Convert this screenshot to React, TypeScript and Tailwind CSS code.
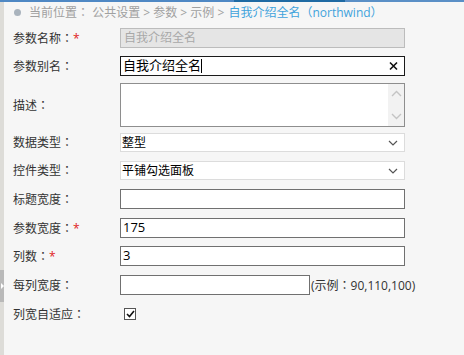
import React from 'react';

const font = { fontFamily: '"Open Sans", "Noto Sans CJK SC", sans-serif' };

// fullwidth colon centred like the original font
const Colon: React.FC = () => <span className="font-['Noto_Sans_CJK_TC',sans-serif]">：</span>;

const Label: React.FC<{ text: string; required?: boolean }> = ({ text, required }) => (
  <div className="w-[107px] shrink-0 text-[12px] text-[#333] leading-none">
    {text}
    <Colon />
    {required && <span className="text-[#e02020]">*</span>}
  </div>
);

const Chevron: React.FC = () => (
  <svg width="10" height="6" viewBox="0 0 10 6" className="absolute right-[6px] top-1/2 -translate-y-1/2">
    <path d="M1 1 L5 5 L9 1" fill="none" stroke="#555" strokeWidth="1.2" />
  </svg>
);

const App: React.FC = () => {
  return (
    <div className="w-[464px] h-[355px] bg-[#f6f6f6] flex flex-col overflow-hidden" style={font}>
      <div className="h-[2px] flex shrink-0">
        <div className="w-[234px] bg-[#4f88c4]" />
        <div className="w-[111px] bg-[#1f6aa3]" />
        <div className="flex-1 bg-[#5a8fc6]" />
      </div>
      <div className="flex flex-1">
        <div className="w-[4px] bg-[#dddcd8] shrink-0 flex flex-col">
          <div className="mt-[268px] h-[32px] bg-[#b9b9b9] flex items-center justify-center">
            <div className="w-0 h-0 border-y-[3px] border-y-transparent border-l-[3px] border-l-white" />
          </div>
        </div>
        <div className="flex-1 flex flex-col">
          <div className="h-[21px] flex items-center pl-[10px] text-[12px] leading-none">
            <span className="w-[7px] h-[7px] rounded-full bg-[#a9b3bd] mr-[8px]" />
            <span className="text-[#a0a0a0] whitespace-pre">
              当前位置<Colon /> 公共设置 &gt; 参数 &gt; 示例 &gt;{' '}
            </span>
            <span className="text-[#3fa3dc] ml-[1px]">自我介绍全名（northwind）</span>
          </div>

          <div className="flex items-center pl-[9px] mt-[5px] h-[20px]">
            <Label text="参数名称" required />
            <div className="w-[285px] h-[20px] bg-[#e5e5e5] border border-[#bcbcbc] flex items-center pl-[3px] text-[12px] text-[#a8a8a8]">
              自我介绍全名
            </div>
          </div>

          <div className="flex items-center pl-[9px] mt-[8px] h-[20px]">
            <Label text="参数别名" />
            <div className="relative w-[285px] h-[20px] bg-white border border-[#1a1a1a] flex items-center pl-[2px] text-[13px] text-black">
              自我介绍全名<span className="w-px h-[14px] bg-black" />
              <svg width="9" height="9" viewBox="0 0 9 9" className="absolute right-[6px] top-1/2 -translate-y-1/2">
                <path d="M1 1 L8 8 M8 1 L1 8" stroke="#111" strokeWidth="1.6" />
              </svg>
            </div>
          </div>

          <div className="flex items-center pl-[9px] mt-[7px] h-[44px]">
            <Label text="描述" />
            <div className="w-[285px] h-[44px] bg-white border border-[#8e8e8e] flex justify-end">
              <div className="w-[16px] bg-[#f2f2f2] flex flex-col items-center justify-between py-[6px]">
                <svg width="11" height="7" viewBox="0 0 11 7">
                  <path d="M1 6 L5.5 1.5 L10 6" fill="none" stroke="#c4c4c4" strokeWidth="1.4" />
                </svg>
                <svg width="11" height="7" viewBox="0 0 11 7">
                  <path d="M1 1 L5.5 5.5 L10 1" fill="none" stroke="#c4c4c4" strokeWidth="1.4" />
                </svg>
              </div>
            </div>
          </div>

          <div className="flex items-center pl-[9px] mt-[6px] h-[19px]">
            <Label text="数据类型" />
            <div className="relative w-[285px] h-[19px] bg-white border border-[#dcdcdc] flex items-center pl-[1px] text-[12px] text-black">
              整型
              <Chevron />
            </div>
          </div>

          <div className="flex items-center pl-[9px] mt-[9px] h-[19px]">
            <Label text="控件类型" />
            <div className="relative w-[285px] h-[19px] bg-white border border-[#dcdcdc] flex items-center pl-[1px] text-[12px] text-black">
              平铺勾选面板
              <Chevron />
            </div>
          </div>

          <div className="flex items-center pl-[9px] mt-[9px] h-[20px]">
            <Label text="标题宽度" />
            <div className="w-[285px] h-[20px] bg-white border border-[#707070]" />
          </div>

          <div className="flex items-center pl-[9px] mt-[9px] h-[20px]">
            <Label text="参数宽度" required />
            <div className="w-[285px] h-[20px] bg-white border border-[#707070] flex items-center pl-[2px] text-[13px] text-black">
              175
            </div>
          </div>

          <div className="flex items-center pl-[9px] mt-[8px] h-[20px]">
            <Label text="列数" required />
            <div className="w-[285px] h-[20px] bg-white border border-[#707070] flex items-center pl-[2px] text-[13px] text-black">
              3
            </div>
          </div>

          <div className="flex items-center pl-[9px] mt-[9px] h-[20px]">
            <Label text="每列宽度" />
            <div className="w-[190px] h-[20px] bg-white border border-[#707070]" />
            <span className="text-[12px] text-[#333] ml-px">
              (示例<Colon />90,110,100)
            </span>
          </div>

          <div className="flex items-center pl-[9px] mt-[13px] h-[12px]">
            <Label text="列宽自适应" />
            <div className="ml-[4px] w-[12px] h-[12px] bg-white border border-[#555] flex items-center justify-center">
              <svg width="9" height="8" viewBox="0 0 9 8">
                <path d="M1 4 L3.5 6.5 L8 1" fill="none" stroke="#111" strokeWidth="1.6" />
              </svg>
            </div>
          </div>
        </div>
      </div>
    </div>
  );
};

export default App;
